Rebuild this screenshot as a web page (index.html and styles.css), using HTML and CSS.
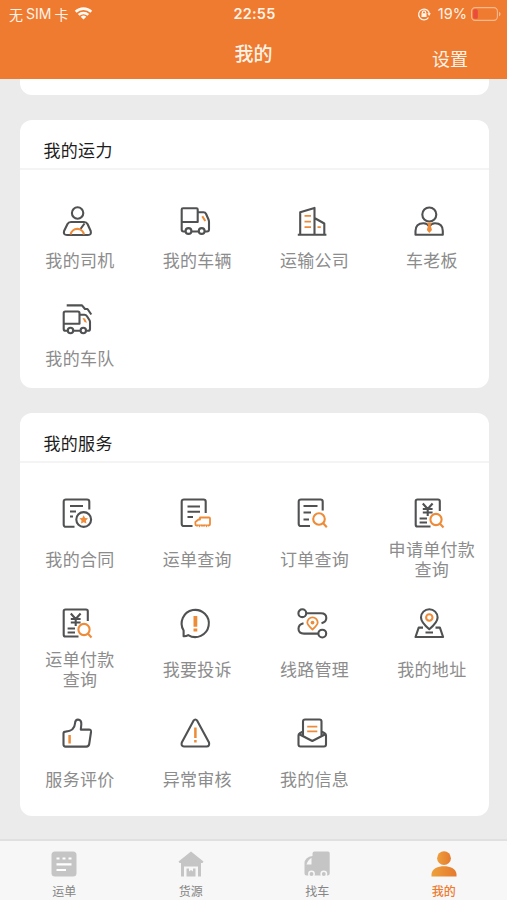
FILE: index.html
```html
<!DOCTYPE html>
<html lang="zh-CN">
<head>
<meta charset="utf-8">
<title>我的</title>
<link rel="stylesheet" href="styles.css">
</head>
<body>
<div class="app">
  <header class="header">
    <div class="status">
      <div class="status-left">
        <span class="carrier">无<span class="latin">SIM</span>卡</span>
        <svg class="wifi" viewBox="0 0 19 14" width="19" height="14"><path d="M.8 4.800a12.500 12.500 0 0 1 17.400 0L16.400 6.700a10 10 0 0 0-13.800 0ZM3.800 7.900a8.300 8.300 0 0 1 11.400 0L13.400 9.700a5.700 5.700 0 0 0-7.800 0ZM6.700 10.800a4.200 4.200 0 0 1 5.600 0L9.500 13.600Z"/></svg>
      </div>
      <span class="clock">22:55</span>
      <div class="status-right">
        <svg viewBox="0 0 14 14" width="14" height="14"><path class="lock-ring" d="M11.500 10.500A5.400 5.400 0 1 1 12.400 7"/><path class="lock-solid" d="M10.300 6.300h3.600L12.100 9ZM4.500 6.300h5v3.700h-5Z"/><path class="lock-ring" d="M5.400 6.500V5.400a1.600 1.600 0 0 1 3.200 0v1.100"/></svg>
        <span class="percent">19%</span>
        <svg class="battery" viewBox="0 0 30 14" width="30" height="14"><rect class="shell" x=".6" y=".6" width="25.800" height="12.800" rx="3.600"/><rect class="charge" x="2.200" y="2.200" width="4.600" height="9.600" rx="1.500"/><path class="cap" d="M28 4.700c2 .8 2 3.800 0 4.600Z"/></svg>
      </div>
    </div>
    <div class="nav">
      <h1 class="title">我的</h1>
      <span class="settings">设置</span>
    </div>
  </header>

  <main class="content">
    <section class="card card-tail"></section>

    <section class="card card-capacity">
      <h2 class="card-title">我的运力</h2>
      <div class="grid">
        <div class="item"><svg class="icon" viewBox="0 0 30 30"><circle cx="15.600" cy="7" r="5.700"/><path d="M9 16H22Q24.500 16 25.500 18L28.700 25Q29.700 29 26 29H5Q1 29 2.100 25L5.500 18Q6.500 16 9 16ZM18.500 23L22.500 17.500"/><path class="o" d="M8.600 28.500A6.800 6.800 0 0 1 22 28.500"/></svg><span class="label">我的司机</span></div>
        <div class="item"><svg class="icon" viewBox="0 0 30 30"><path d="M5.500 25.500H3.500Q1.700 25.500 1.700 23.500V3.500Q1.700 2.200 3 2.200H16.500Q17.700 2.200 17.700 3.500V16H1.700M17.700 6.300H23.500Q25.300 6.300 26.100 8L28.500 13.500Q29 14.800 29 16V23.500Q29 25.500 27 25.500H25M11.500 25.500H18.500"/><circle cx="8.500" cy="25" r="2.900"/><circle cx="21.700" cy="25" r="2.900"/><path class="o" d="M22.300 10.200L25.300 15"/></svg><span class="label">我的车辆</span></div>
        <div class="item"><svg class="icon" viewBox="0 0 30 30"><path d="M.8 28.700H29.400M3.200 28.500V6.200L17.500 1.900V28.500M17.500 12L27.300 17.500V28.500"/><path class="o thin" d="M7.500 9.900H14M7.500 15.600H14M7.500 21.200H14M20.500 21.200H23.800"/></svg><span class="label">运输公司</span></div>
        <div class="item"><svg class="icon" viewBox="0 0 30 30"><circle cx="15.300" cy="8.500" r="7"/><path d="M15.300 20.500Q13.500 17.200 9.500 17.200Q1.500 17.200 1.500 25V28.800H28.800V25Q28.800 17.200 21 17.200Q17 17.200 15.300 20.500"/><path class="of" d="M12.700 16.700H18L16.600 19.200L18 24L15.300 27L12.800 24L14.200 19.200Z"/></svg><span class="label">车老板</span></div>
        <div class="item"><svg class="icon" viewBox="0 0 30 30"><path d="M4.700 1.400H20L23 5H25.500L29.300 10.500M5.500 26.800H3.500Q1.700 26.800 1.700 25V9Q1.700 7.500 3.200 7.500H16Q17.500 7.500 17.500 9V19.700H1.700M17.500 10.700H22.500Q24 10.700 25 12.300L27.400 16Q28 17 28 18V25Q28 26.800 26 26.800H24.500M11.500 26.800H18"/><circle cx="8.500" cy="26.500" r="2.700"/><circle cx="21.300" cy="26.500" r="2.700"/><path class="of" d="M20.500 14L23 14.500L25 18.800L22.500 18Z"/></svg><span class="label">我的车队</span></div>
      </div>
    </section>

    <section class="card card-service">
      <h2 class="card-title">我的服务</h2>
      <div class="grid">
        <div class="item"><svg class="icon" viewBox="0 0 30 30"><path d="M12.500 28.700H4Q1.700 28.700 1.700 26.500V3.700Q1.700 1.500 4 1.500H25Q27.300 1.500 27.300 3.700V11.500M8 8H21M8 13.500H14M8 18.500H11"/><circle cx="21.700" cy="21.500" r="7.400"/><path class="of" d="M21.700 17.200L23.100 19.900L26 20.300L23.900 22.500L24.400 25.500L21.700 24.200L19 25.500L19.500 22.500L17.400 20.300L20.300 19.900Z"/></svg><span class="label">我的合同</span></div>
        <div class="item"><svg class="icon" viewBox="0 0 30 30"><path d="M12.500 28H4Q1.700 28 1.700 25.800V3.700Q1.700 1.500 4 1.500H23.500Q25.700 1.500 25.700 3.700V15M7.500 8.500H20M7.500 13.700H20M7.500 19H13"/><path class="o thin" d="M18 27.500H16.500Q15.400 27.500 15.400 26.300V24L18.500 21.500H20V19.500H29Q30 19.500 30 20.500V26.300Q30 27.500 28.800 27.500H28M21 27.500H25"/><path class="of" d="M17.500 26.500h4l-2 3ZM24.500 26.500h4l-2 3Z"/></svg><span class="label">运单查询</span></div>
        <div class="item"><svg class="icon" viewBox="0 0 30 30"><path d="M13 28H4Q1.700 28 1.700 25.800V3.700Q1.700 1.500 4 1.500H23.500Q25.700 1.500 25.700 3.700V12.500M6.500 8H20.500M6.500 14.500H14M6.500 21.500H12"/><circle class="o" cx="22" cy="21" r="5.800"/><path class="o" d="M26.200 25.200L29.800 29.300"/></svg><span class="label">订单查询</span></div>
        <div class="item"><svg class="icon" viewBox="0 0 30 30"><use href="#pay"/></svg><span class="label">申请单付款<br>查询</span></div>
        <div class="item"><svg class="icon" viewBox="0 0 30 30"><g id="pay"><path d="M16.500 28.500H3.500Q1.700 28.500 1.700 26.700V3.300Q1.700 1.500 3.500 1.500H24Q25.800 1.500 25.800 3.300V13M8.800 5.500L13.700 11L18.600 5.500M8.800 11H18.600M8.800 14.500H18.600M13.700 11V18M5.600 20.500H13M5.600 24.500H13"/><circle class="o" cx="22" cy="21.500" r="5.600"/><path class="o" d="M26 25.700L29.500 29.500"/></g></svg><span class="label">运单付款<br>查询</span></div>
        <div class="item"><svg class="icon" viewBox="0 0 30 30"><path d="M8.200 27.100A13.600 13.600 0 1 0 3.600 22.500V28.200Q6 28.400 8.200 27.100Z"/><path class="of" d="M13.500 8h3.800v10.800h-3.800ZM13.500 20.600h3.800v2.800h-3.800Z"/></svg><span class="label">我要投诉</span></div>
        <div class="item"><svg class="icon" viewBox="0 0 30 30"><circle cx="5.300" cy="5.200" r="3.900"/><circle cx="25.300" cy="25.600" r="3.900"/><path d="M9.200 5.200H24Q29.300 5.200 29.300 10Q29.300 14 24.500 15.300M21.400 25.600H7Q1.500 25.600 1.500 20.800Q1.500 16.500 6.500 15.300"/><path class="o thin" d="M15.500 21.500Q10.300 17 10.300 14.600A5.200 5.200 0 0 1 20.700 14.600Q20.700 17 15.500 21.500Z"/><circle class="of" cx="15.500" cy="14.600" r="1.900"/></svg><span class="label">线路管理</span></div>
        <div class="item"><svg class="icon" viewBox="0 0 30 30"><path d="M15.300 21.200Q7 14.300 7 9.500A8.300 8.300 0 0 1 23.600 9.500Q23.600 14.300 15.300 21.200ZM9 19.600H4.700L1.500 29H29.100L25.900 19.600H21.500M11.500 24.500H19"/><circle class="o" cx="15.300" cy="9.500" r="3.200"/></svg><span class="label">我的地址</span></div>
        <div class="item"><svg class="icon" viewBox="0 0 30 30"><path d="M3.500 13.600Q12.500 13 13 5.500Q13.200 1.600 16 1.600Q19.600 1.600 19.300 6.500L18.800 11.600H27Q29.300 11.600 29 14L27.200 26Q26.800 28.600 24.300 28.600H3.500Q1.500 28.600 1.500 26.500V15.600Q1.500 13.600 3.500 13.600Z"/><path class="o tip" d="M7.600 17V25.500"/></svg><span class="label">服务评价</span></div>
        <div class="item"><svg class="icon" viewBox="0 0 30 30"><path d="M13.500 2.700Q15.400 .3 17.200 2.700L29 24.500Q30 28.200 26.500 28.500H4Q.7 28.200 1.800 24.500Z"/><path class="o tip" d="M15.400 9.500V20M15.400 22V24.500"/></svg><span class="label">异常审核</span></div>
        <div class="item"><svg class="icon" viewBox="0 0 30 30"><path d="M6 18V3.500Q6 1.500 8 1.500H22.500Q24.500 1.500 24.500 3.500V18M6 13.500L2.500 15.500Q1.500 16 1.500 17.500V26.500Q1.500 28.500 3.500 28.500H27Q29 28.500 29 26.500V17.500Q29 16 28 15.500L24.500 13.500M1.800 16L15.300 23L28.800 16"/><path class="o thin" d="M10.200 8.700H20.300M10.200 13.300H20.300"/></svg><span class="label">我的信息</span></div>
      </div>
    </section>
  </main>

  <nav class="tabs">
    <div class="tab"><svg viewBox="0 0 26 26"><rect x=".5" y=".5" width="25" height="25" rx="3.500"/><path class="cut" d="M5.500 7.500h3M11.500 7.500h3M17.500 7.500h3M5.500 13.300H20.500M5.500 19H15"/></svg><span>运单</span></div>
    <div class="tab"><svg viewBox="0 0 26 26"><path d="M13 .5L25.500 10.500L24.500 12H23V25.500H20V15.500H6V25.500H3V12H1.500L.5 10.500Z"/><path d="M8.500 17.500H11V20.500L13 19L15 20.500V17.500H17.500V25.500H8.500Z"/></svg><span>货源</span></div>
    <div class="tab"><svg viewBox="0 0 26 26"><path d="M10.500 .5H24Q25.700 .5 25.700 2.200V22.500Q25.700 24.500 23.500 24.500H2.500Q.5 24.500 .5 22.500V12Q.5 9.500 2.500 7.500Q4.800 5 8.500 5V2.500Q8.500 .5 10.500 .5Z"/><path class="window" d="M7.500 7V13.500H2.500Q4 8.500 7.500 7Z"/><circle class="wheel" cx="7.500" cy="23" r="2.700"/><circle class="wheel" cx="19.800" cy="23" r="2.700"/></svg><span>找车</span></div>
    <div class="tab active"><svg viewBox="0 0 26 26"><defs><linearGradient id="warm"><stop offset="0" stop-color="#eda03d"/><stop offset="1" stop-color="#e57a2e"/></linearGradient></defs><circle cx="13" cy="7.200" r="6.900" fill="url(#warm)"/><path fill="url(#warm)" d="M.5 25.500V23C1 17.500 7 15.200 13 15.200S25 17.500 25.500 23V25.500Z"/></svg><span>我的</span></div>
  </nav>
</div>
</body>
</html>
```
FILE: styles.css
```css
* { box-sizing: border-box; }

body {
  margin: 0;
  background: #ebebeb;
  font-family: "Noto Sans CJK SC", sans-serif;
}

.app {
  display: flex;
  flex-direction: column;
  width: 507px;
  height: 900px;
  overflow: hidden;
}

.header {
  flex: none;
  height: 79px;
  background: #ee7b30;
  color: #fff3e8;
}

.status {
  display: grid;
  grid-template-columns: 1fr auto 1fr;
  align-items: center;
  height: 28px;
  padding: 0 7px 0 9px;
  font-size: 14px;
  line-height: 20px;
}

.status-left,
.status-right {
  display: flex;
  align-items: center;
}

.status-left { gap: 6px; margin-top: -1px; }
.status-right { justify-content: flex-end; }
.carrier { display: flex; gap: 3px; }
.latin { font-family: Inter, sans-serif; font-size: 14px; }
.wifi { fill: #fffaf4; margin-top: -1px; }

.clock {
  font-family: Inter, sans-serif;
  font-size: 14.500px;
  font-weight: 600;
  letter-spacing: .2px;
}

.percent {
  margin: 0 4px 0 7px;
  font-family: Inter, sans-serif;
  font-size: 14.500px;
}

.lock-ring { fill: none; stroke: #fff3e8; stroke-width: 1.300; }
.lock-solid { fill: #fff3e8; }
.battery { margin-right: -1px; }
.shell { fill: none; stroke: #f6b98e; stroke-width: 1.100; }
.charge { fill: #ea4b3d; }
.cap { fill: #f6b98e; }

.nav {
  display: grid;
  grid-template-columns: 1fr auto 1fr;
  height: 51px;
}

.title {
  grid-column: 2;
  margin: 0;
  padding-top: 11px;
  font-size: 19px;
  font-weight: 500;
  line-height: 28px;
}

.settings {
  justify-self: end;
  padding: 17px 39px 0 0;
  font-size: 18px;
  line-height: 26px;
}

.content {
  flex: 1;
  min-height: 0;
  padding: 0 18.500px 0 19.500px;
}

.card {
  background: #fff;
  border-radius: 12px;
}

.card-tail { height: 16px; border-radius: 0 0 12px 12px; }
.card-capacity { height: 268px; margin-top: 25px; }
.card-service { height: 403px; margin-top: 25px; }

.card-title {
  height: 50px;
  margin: 0;
  padding: 17px 24px 0;
  border-bottom: 2px solid #f4f4f4;
  color: #1c1c1c;
  font-size: 17px;
  font-weight: 400;
  line-height: 26px;
  letter-spacing: .3px;
}

.grid {
  display: grid;
  grid-template-columns: repeat(4, 117.300px);
  margin-left: 1.800px;
}

.card-capacity .grid { padding-top: 36px; grid-auto-rows: 98px; }
.card-service .grid { padding-top: 35px; grid-auto-rows: 110px; }

.item {
  display: flex;
  flex-direction: column;
  align-items: center;
}

.icon {
  flex: none;
  width: 30px;
  height: 30px;
  margin-right: 5px;
  overflow: visible;
  fill: none;
  stroke: #505152;
  stroke-width: 2.100;
  stroke-linejoin: round;
}

.icon .o { stroke: #ee8b38; }
.icon .of { fill: #ee8b38; stroke: none; }
.icon .thin { stroke-width: 1.800; }
.icon .tip { stroke-width: 2.500; }

.label {
  display: flex;
  align-items: center;
  justify-content: center;
  height: 40px;
  color: #8c8c8c;
  font-size: 17px;
  font-weight: 400;
  line-height: 20.500px;
  letter-spacing: .3px;
  text-align: center;
  white-space: nowrap;
}

.card-capacity .label { margin-top: 4px; }
.card-service .label { margin-top: 11px; }

.tabs {
  display: grid;
  grid-template-columns: repeat(4, 1fr);
  flex: none;
  height: 61px;
  padding-left: 1px;
  border-top: 2px solid #e0e0e0;
  background: #f7f7f7;
}

.tab {
  display: flex;
  flex-direction: column;
  align-items: center;
  padding-top: 10px;
  color: #858585;
  font-size: 12px;
  line-height: 18px;
}

.tab svg { width: 26px; height: 26px; margin-bottom: 5px; fill: #c5c5c5; }
.tab .cut { fill: none; stroke: #fff; stroke-width: 2.200; }
.tab .window { fill: #f7f7f7; }
.tab .wheel { stroke: #f7f7f7; stroke-width: 1.500; }
.tab.active { color: #ee7b30; font-weight: 500; }
```
